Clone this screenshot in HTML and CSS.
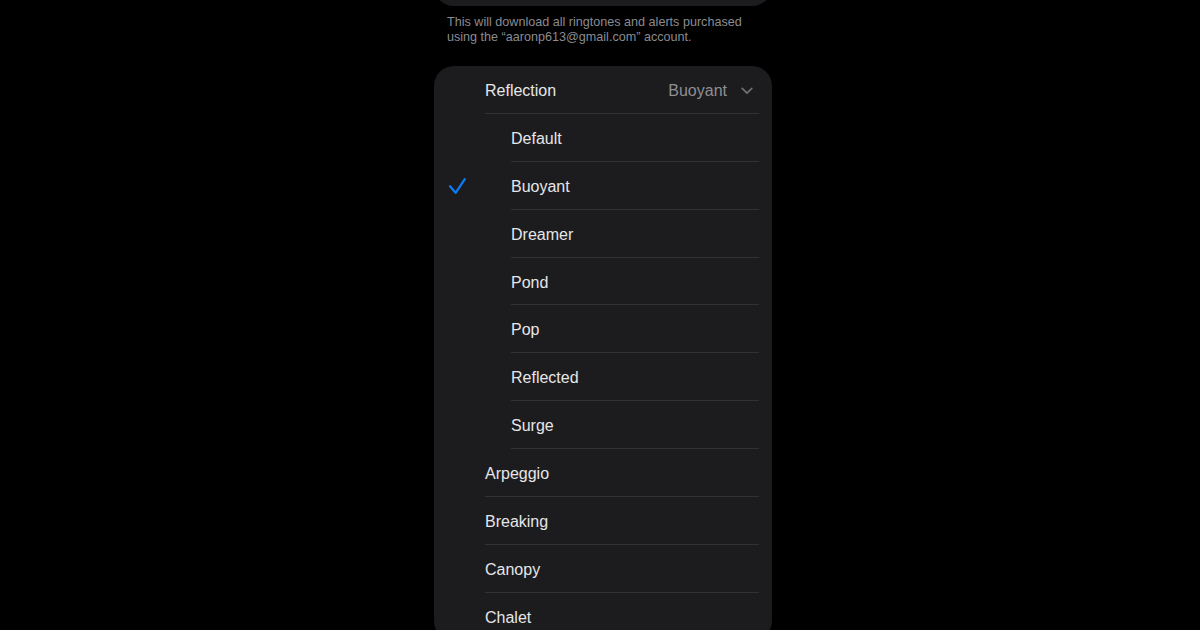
FILE: index.html
```html
<!DOCTYPE html>
<html lang="en">
<head>
    <meta charset="UTF-8">
    <meta name="viewport" content="width=device-width, initial-scale=1.0">
    <title>Ringtone</title>
    <link rel="stylesheet" href="styles.css">
</head>
<body>
    <div class="screen">
        <!-- end of the "Download All Purchased Tones" group -->
        <div class="group group-top"></div>
        <p class="footer-note">This will download all ringtones and alerts purchased using the “aaronp613@gmail.com” account.</p>

        <div class="group">
            <div class="row">
                <span class="check"></span>
                <div class="cell">
                    <span class="label">Reflection</span>
                    <span class="value">Buoyant</span>
                    <svg class="chevron" width="12" height="8" viewBox="0 0 12 8">
                        <path d="M1.2 1.4 L6 6.2 L10.8 1.4" fill="none" stroke="#6f6f74" stroke-width="1.7" stroke-linecap="round" stroke-linejoin="round"/>
                    </svg>
                </div>
            </div>
            <div class="row sub">
                <span class="check"></span>
                <div class="cell"><span class="label">Default</span></div>
            </div>
            <div class="row sub">
                <span class="check">
                    <svg width="18" height="18" viewBox="0 0 18 18">
                        <path d="M2 9.2 L7.6 15.8 L16.8 2.2" fill="none" stroke="#0a7cf5" stroke-width="2.2" stroke-linecap="round" stroke-linejoin="round"/>
                    </svg>
                </span>
                <div class="cell"><span class="label">Buoyant</span></div>
            </div>
            <div class="row sub">
                <span class="check"></span>
                <div class="cell"><span class="label">Dreamer</span></div>
            </div>
            <div class="row sub">
                <span class="check"></span>
                <div class="cell"><span class="label">Pond</span></div>
            </div>
            <div class="row sub">
                <span class="check"></span>
                <div class="cell"><span class="label">Pop</span></div>
            </div>
            <div class="row sub">
                <span class="check"></span>
                <div class="cell"><span class="label">Reflected</span></div>
            </div>
            <div class="row sub">
                <span class="check"></span>
                <div class="cell"><span class="label">Surge</span></div>
            </div>
            <div class="row">
                <span class="check"></span>
                <div class="cell"><span class="label">Arpeggio</span></div>
            </div>
            <div class="row">
                <span class="check"></span>
                <div class="cell"><span class="label">Breaking</span></div>
            </div>
            <div class="row">
                <span class="check"></span>
                <div class="cell"><span class="label">Canopy</span></div>
            </div>
            <div class="row">
                <span class="check"></span>
                <div class="cell"><span class="label">Chalet</span></div>
            </div>
        </div>
    </div>
</body>
</html>
```

FILE: styles.css
```css
/* Dark page, phone column in the middle */
body {
    margin: 0;
    background-color: #000;
    font-family: "Liberation Sans", Arial, sans-serif;
    height: 630px;
    overflow: hidden;
}

.screen {
    width: 338px;
    margin: 0 auto;
    padding-left: 6px;
}

/* Inset grouped list card */
.group {
    background-color: #1c1c1e;
    border-radius: 20px;
}

/* only the bottom of this card is on screen */
.group-top {
    height: 50px;
    margin-top: -44px;
}

.footer-note {
    margin: 0 0 21px 0;
    padding: 9px 20px 0 13px;
    font-size: 12.6px;
    line-height: 15px;
    color: #8b8b90;
}

.row {
    display: flex;
    height: 47.9px;
}

.check {
    width: 51px;
    flex-shrink: 0;
    display: flex;
    align-items: center;
    padding-left: 14px;
    padding-top: 2px;
    box-sizing: border-box;
}

.check svg {
    display: block;
    margin-top: -2px;
}

.cell {
    flex: 1;
    display: flex;
    align-items: center;
    margin-right: 13px;
    padding-top: 3px;
    border-bottom: 1px solid #323234;
}

.sub .cell {
    margin-left: 26px;
}

.label {
    flex: 1;
    font-size: 16px;
    color: #e6e6e8;
}

.value {
    font-size: 16px;
    color: #8e8e93;
    margin-right: 14px;
}

.chevron {
    display: block;
    margin-right: 6px;
}
```
